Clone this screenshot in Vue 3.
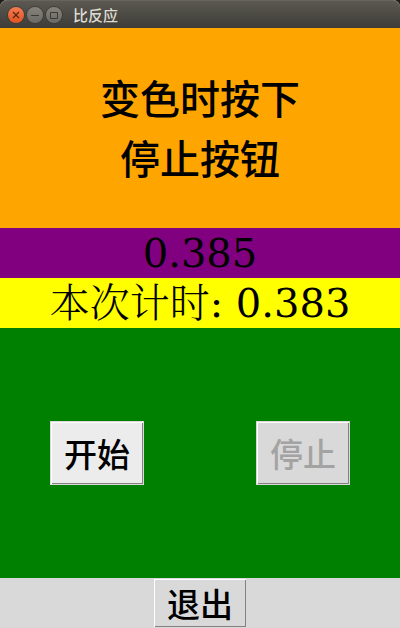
<script setup>
import { ref } from 'vue'

const title = '比反应'
const current = ref('0.385')
const last = ref('0.383')
const running = ref(false)
</script>

<template>
  <main class="window">
    <header class="titlebar">
      <button class="control close" type="button" aria-label="关闭">
        <svg viewBox="0 0 16 16"><path d="M5 5l6 6M11 5l-6 6" /></svg>
      </button>
      <button class="control" type="button" aria-label="最小化">
        <svg viewBox="0 0 16 16"><path d="M4 8.5h8" /></svg>
      </button>
      <button class="control" type="button" aria-label="最大化">
        <svg viewBox="0 0 16 16"><path d="M4.5 5.5h7v6h-7z" /></svg>
      </button>
      <h1 class="title">{{ title }}</h1>
    </header>
    <section class="prompt">
      <p>变色时按下</p>
      <p>停止按钮</p>
    </section>
    <output class="time current">{{ current }}</output>
    <output class="time last"><span class="caption">本次计时</span>: {{ last }}</output>
    <section class="actions">
      <button class="key start" type="button">开始</button>
      <button class="key" type="button" :disabled="!running">停止</button>
    </section>
    <footer class="footer">
      <button class="key quit" type="button">退出</button>
    </footer>
  </main>
</template>

<style>
body {
  background: #d9d9d9;
}
</style>

<style scoped>
.window {
  display: flex;
  flex-direction: column;
  min-height: 100vh;
  color: #000;
  font-family: "Noto Sans CJK SC", sans-serif;
  background: #d9d9d9;
}

.titlebar {
  display: flex;
  align-items: center;
  gap: 3px;
  box-sizing: border-box;
  height: 28px;
  padding: 0 8px;
  border-top: 1px solid #66645c;
  border-radius: 7px 7px 0 0;
  background: linear-gradient(#5b5951, #3d3c38);
  box-shadow: 0 -8px 0 8px #1c1b18;
  clip-path: inset(0);
}

.control {
  width: 16px;
  height: 16px;
  padding: 0;
  border: 0;
  border-radius: 50%;
  background: linear-gradient(#85837c, #6b6a64);
  box-shadow: 0 0 0 1px #3d3c37;
}

.control.close {
  background: linear-gradient(#f37b52, #e2531f);
}

.control svg {
  display: block;
  width: 16px;
  height: 16px;
  fill: none;
  stroke: #3a3934;
  stroke-width: 1;
}

.close svg {
  stroke: #5c2412;
  stroke-width: 1.3;
}

.title {
  margin: 0 0 0 8px;
  color: #dfdbd2;
  font-size: 15px;
  font-weight: 500;
  line-height: 24px;
}

.prompt {
  display: flex;
  flex-direction: column;
  justify-content: center;
  box-sizing: border-box;
  height: 200px;
  padding-bottom: 2px;
  background: #ffa500;
  font-size: 40px;
  font-weight: 500;
  line-height: 60px;
  text-align: center;
}

.prompt p {
  margin: 0;
}

.time {
  display: block;
  height: 50px;
  font-family: "DejaVu Serif", "Noto Sans CJK SC", serif;
  font-size: 40px;
  line-height: 50px;
  text-align: center;
  white-space: nowrap;
}

.current {
  background: #800080;
}

.last {
  background: #ffff00;
}

.caption {
  font-family: "Noto Serif CJK SC", "AR PL UMing CN", "Noto Sans CJK SC", serif;
  font-weight: 300;
  line-height: 0;
}

.actions {
  display: flex;
  flex: 1;
  align-items: center;
  justify-content: space-between;
  padding: 0 50px;
  background: #008000;
}

.key {
  box-sizing: border-box;
  width: 94px;
  height: 64px;
  padding: 0;
  border: 1px solid #d9d9d9;
  background: #d9d9d9;
  box-shadow: inset 1px 1px #fff, inset -1px -1px #828282;
  color: #000;
  font-family: inherit;
  font-size: 33px;
  font-weight: 500;
  line-height: 48px;
}

.start {
  background: #ececec;
}

.key:disabled {
  color: #a3a3a3;
}

.footer {
  display: flex;
  align-items: center;
  justify-content: center;
  height: 50px;
}

.quit {
  height: 50px;
}
</style>
